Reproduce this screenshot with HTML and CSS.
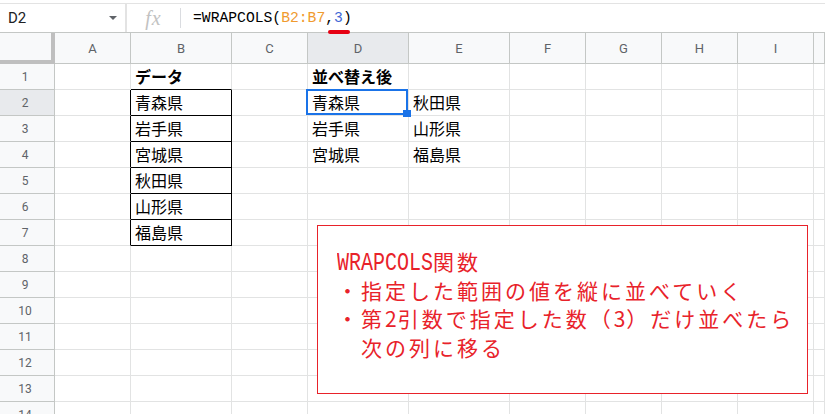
FILE: index.html
```html
<!DOCTYPE html>
<html lang="ja">
<head>
  <meta charset="UTF-8">
  <meta name="viewport" content="width=device-width, initial-scale=1.0">
  <title>WRAPCOLS</title>
  <link rel="stylesheet" href="styles.css">
</head>
<body>
  <div class="formula-bar">
    <div class="namebox">
      <span>D2</span>
      <i class="arrow"></i>
    </div>
    <div class="sep"></div>
    <div class="fx">fx</div>
    <div class="sep thin"></div>
    <div class="formula">=WRAPCOLS(<span class="ref">B2:B7</span>,<span class="num">3</span>)</div>
  </div>
  <div class="mark"></div>

  <div class="sheet">
    <div class="corner"></div>
    <div class="ch">A</div><div class="ch">B</div><div class="ch">C</div><div class="ch on">D</div><div class="ch">E</div>
    <div class="ch">F</div><div class="ch">G</div><div class="ch">H</div><div class="ch">I</div><div class="ch"></div>

    <div class="rh">1</div><div class="c"></div><div class="c b bx-t">データ</div><div class="c"></div><div class="c b">並べ替え後</div><div class="c"></div>
    <div class="c"></div><div class="c"></div><div class="c"></div><div class="c"></div><div class="c"></div>

    <div class="rh on">2</div><div class="c bx-l"></div><div class="c bx">青森県</div><div class="c"></div><div class="c">青森県</div><div class="c">秋田県</div>
    <div class="c"></div><div class="c"></div><div class="c"></div><div class="c"></div><div class="c"></div>

    <div class="rh">3</div><div class="c bx-l"></div><div class="c bx">岩手県</div><div class="c"></div><div class="c">岩手県</div><div class="c">山形県</div>
    <div class="c"></div><div class="c"></div><div class="c"></div><div class="c"></div><div class="c"></div>

    <div class="rh">4</div><div class="c bx-l"></div><div class="c bx">宮城県</div><div class="c"></div><div class="c">宮城県</div><div class="c">福島県</div>
    <div class="c"></div><div class="c"></div><div class="c"></div><div class="c"></div><div class="c"></div>

    <div class="rh">5</div><div class="c bx-l"></div><div class="c bx">秋田県</div><div class="c"></div><div class="c"></div><div class="c"></div>
    <div class="c"></div><div class="c"></div><div class="c"></div><div class="c"></div><div class="c"></div>

    <div class="rh">6</div><div class="c bx-l"></div><div class="c bx">山形県</div><div class="c"></div><div class="c"></div><div class="c"></div>
    <div class="c"></div><div class="c"></div><div class="c"></div><div class="c"></div><div class="c"></div>

    <div class="rh">7</div><div class="c bx-l"></div><div class="c bx">福島県</div><div class="c"></div><div class="c"></div><div class="c"></div>
    <div class="c"></div><div class="c"></div><div class="c"></div><div class="c"></div><div class="c"></div>

    <div class="rh">8</div><div class="c"></div><div class="c"></div><div class="c"></div><div class="c"></div><div class="c"></div>
    <div class="c"></div><div class="c"></div><div class="c"></div><div class="c"></div><div class="c"></div>

    <div class="rh">9</div><div class="c"></div><div class="c"></div><div class="c"></div><div class="c"></div><div class="c"></div>
    <div class="c"></div><div class="c"></div><div class="c"></div><div class="c"></div><div class="c"></div>

    <div class="rh">10</div><div class="c"></div><div class="c"></div><div class="c"></div><div class="c"></div><div class="c"></div>
    <div class="c"></div><div class="c"></div><div class="c"></div><div class="c"></div><div class="c"></div>

    <div class="rh">11</div><div class="c"></div><div class="c"></div><div class="c"></div><div class="c"></div><div class="c"></div>
    <div class="c"></div><div class="c"></div><div class="c"></div><div class="c"></div><div class="c"></div>

    <div class="rh">12</div><div class="c"></div><div class="c"></div><div class="c"></div><div class="c"></div><div class="c"></div>
    <div class="c"></div><div class="c"></div><div class="c"></div><div class="c"></div><div class="c"></div>

    <div class="rh">13</div><div class="c"></div><div class="c"></div><div class="c"></div><div class="c"></div><div class="c"></div>
    <div class="c"></div><div class="c"></div><div class="c"></div><div class="c"></div><div class="c"></div>

    <div class="rh">14</div><div class="c"></div><div class="c"></div><div class="c"></div><div class="c"></div><div class="c"></div>
    <div class="c"></div><div class="c"></div><div class="c"></div><div class="c"></div><div class="c"></div>
  </div>

  <!-- selected cell D2 -->
  <div class="selection"></div>
  <div class="handle"></div>

  <div class="note">
    <div class="line"><span class="mono">WRAPCOLS</span>関数</div>
    <div class="line">・指定した範囲の値を縦に並べていく</div>
    <div class="line">・第<span class="digit">2</span>引数で指定した数（<span class="digit">3</span>）だけ並べたら</div>
    <div class="line indent">次の列に移る</div>
  </div>
</body>
</html>
```

FILE: styles.css
```css
body {
  margin: 0;
  width: 825px;
  height: 414px;
  overflow: hidden;
  position: relative;
  background: #ffffff;
  font-family: Roboto, "Noto Sans CJK JP", sans-serif;
  color: #000000;
}

/* formula bar */
.formula-bar {
  margin-top: 3px;
  height: 30px;
  box-sizing: border-box;
  border-top: 1px solid #e3e3e3;
  border-bottom: 1px solid #c4c7c5;
  display: flex;
  align-items: center;
}
.namebox {
  width: 125px;
  box-sizing: border-box;
  padding: 0 8px;
  display: flex;
  align-items: center;
  justify-content: space-between;
  font-size: 15px;
  color: #202124;
}
.arrow {
  width: 0;
  height: 0;
  border-left: 4px solid transparent;
  border-right: 4px solid transparent;
  border-top: 4px solid #5f6368;
}
.sep {
  width: 2px;
  align-self: stretch;
  background: #e3e3e3;
}
.sep.thin {
  width: 1px;
  align-self: center;
  height: 20px;
  background: #dadce0;
}
.fx {
  width: 53px;
  text-align: center;
  font-family: "Liberation Serif", serif;
  font-style: italic;
  font-size: 20px;
  letter-spacing: 1px;
  color: #c2c2c2;
}
.formula {
  padding-left: 12px;
  font-family: "Liberation Mono", monospace;
  font-size: 14.7px;
  color: #000000;
}
.formula .ref {
  color: #f09a2e;
}
.formula .num {
  color: #3f67d6;
}
.mark {
  position: absolute;
  left: 328px;
  top: 30px;
  width: 22px;
  height: 4px;
  border-radius: 2px;
  background: #e60012;
}

/* grid */
.sheet {
  display: grid;
  grid-template-columns: 55px 76px 101px 76px 101px 101px 76px 76px 76px 76px 1fr;
  grid-template-rows: 31px;
  grid-auto-rows: 26px;
}
.sheet > div {
  box-sizing: border-box;
  white-space: nowrap;
  overflow: visible;
}
.corner {
  background: #f8f9fa;
  border-right: 4px solid #bfbfbf;
  border-bottom: 4px solid #bfbfbf;
}
.ch {
  background: #f8f9fa;
  border-right: 1px solid #c4c7c5;
  border-bottom: 1px solid #c4c7c5;
  color: #5f6368;
  font-size: 13px;
  display: flex;
  align-items: center;
  justify-content: center;
}
.rh {
  background: #f8f9fa;
  border-right: 1px solid #c4c7c5;
  border-bottom: 1px solid #c4c7c5;
  color: #5f6368;
  font-size: 12px;
  padding-right: 4px;
  display: flex;
  align-items: center;
  justify-content: center;
}
.ch.on,
.rh.on {
  background: #e8eaed;
}
.c {
  border-right: 1px solid #e2e3e3;
  border-bottom: 1px solid #e2e3e3;
  padding-left: 4px;
  font-family: "Noto Sans CJK JP", sans-serif;
  font-size: 16px;
  line-height: 25px;
}
.c.b {
  font-weight: bold;
}
.c.bx {
  border-right-color: #000000;
  border-bottom-color: #000000;
}
.c.bx-l {
  border-right-color: #000000;
}
.c.bx-t {
  border-bottom-color: #000000;
}

/* active cell */
.selection {
  position: absolute;
  left: 306px;
  top: 89px;
  width: 102px;
  height: 26px;
  box-sizing: border-box;
  border: 2px solid #1a73e8;
}
.handle {
  position: absolute;
  left: 403px;
  top: 110px;
  width: 8px;
  height: 7px;
  background: #1a73e8;
}

/* callout */
.note {
  position: absolute;
  left: 317px;
  top: 225px;
  width: 491px;
  height: 169px;
  box-sizing: border-box;
  border: 1px solid #e8222a;
  background: #ffffff;
  padding: 21px 0 0 19px;
  color: #e8222a;
  font-family: "Noto Sans CJK JP", sans-serif;
  font-size: 21px;
  line-height: 28.7px;
  letter-spacing: 3px;
  white-space: nowrap;
}
.note .indent {
  padding-left: 24px;
}
.note .mono {
  display: inline-block;
  font-family: "Liberation Mono", monospace;
  font-size: 20px;
  line-height: 20px;
  letter-spacing: 0;
  transform: scaleY(1.25);
  transform-origin: 0 15px;
}
.note .digit {
  letter-spacing: 1px;
}
```
